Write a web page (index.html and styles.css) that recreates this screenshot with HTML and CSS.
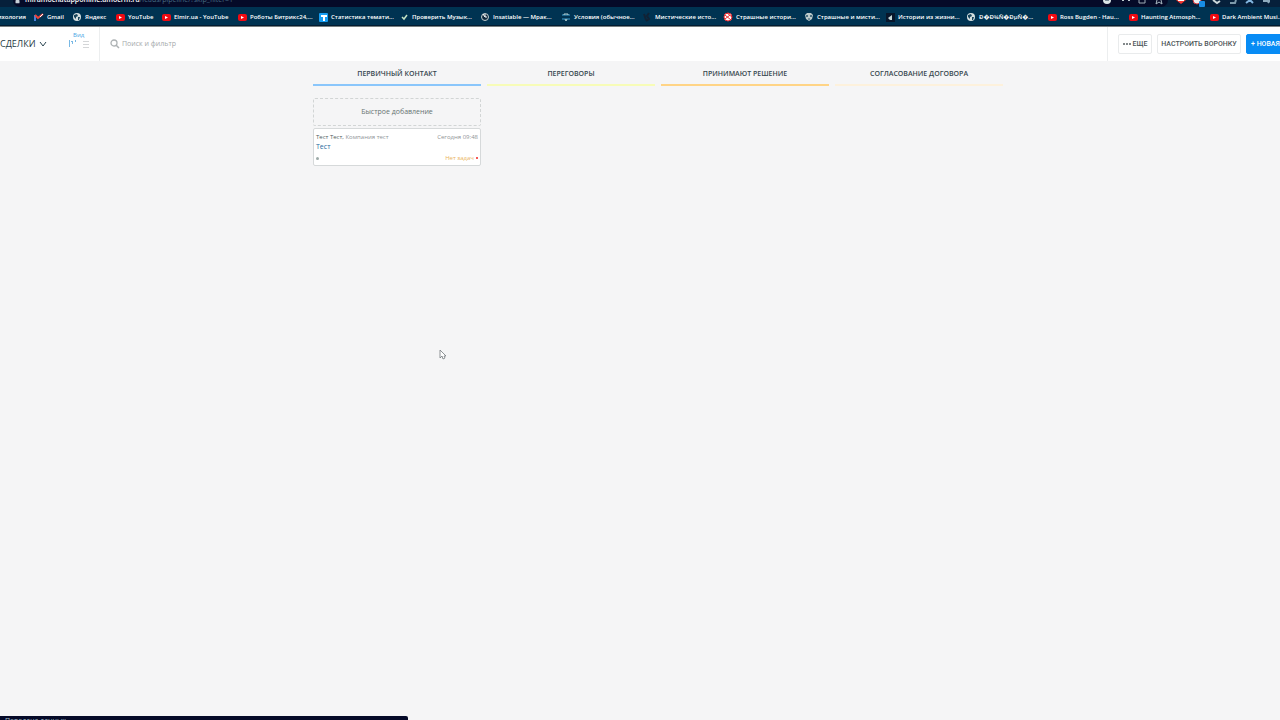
FILE: index.html
```html
<!DOCTYPE html>
<html lang="ru">
<head>
<meta charset="utf-8">
<meta name="viewport" content="width=device-width, initial-scale=1">
<title>Сделки</title>
<link rel="stylesheet" href="styles.css">
</head>
<body>
<svg class="defs" aria-hidden="true">
  <symbol id="yt" viewBox="0 0 10 10"><rect x="1" y="2" width="9" height="7" rx="2" fill="#f00a12"/><path d="M4 4l3 1.5L4 7z" fill="#fff"/></symbol>
  <symbol id="globe" viewBox="0 0 10 10"><circle cx="5" cy="5" r="4" fill="#d5dfdf"/><path d="M2 3l3-1 1 2-2 1v2L2 5zM6 5l2 0-1 3-1 0z" fill="#17445b"/></symbol>
</svg>
<header class="browser">
  <div class="toolbar">
    <div class="omnibox">
      <svg class="lock" viewBox="0 0 6 6"><rect width="6" height="5" rx="1" fill="#c6d0d8"/></svg>
      <span class="url"><b>miramochatapponline.amocrm.ru</b>/leads/pipeline/?skip_filter=1</span>
      <svg class="omni-icons" viewBox="0 0 70 8"><circle cx="9" cy="0" r="4" fill="#dce6e7"/><path d="M7 0h4" stroke="#16334a"/><path d="M24 0h2M30 0h2" stroke="#bdc9ce" stroke-width="2"/><path d="M41 0v3h6V0" fill="none" stroke="#9eabb5"/><path d="M58 4l1-4M63 0l1 4-3-2-3 2" fill="none" stroke="#a9b8c0"/></svg>
    </div>
    <svg class="extensions" viewBox="0 0 112 8"><path d="M8 0h10l-5 4z" fill="#f5352f"/><path d="M10 0h6" stroke="#fff" stroke-width="2"/><circle cx="29" cy="0" r="4" fill="#eee" stroke="#d5353a"/><rect x="31" y="1" width="6" height="6" rx="1" fill="#188ce5"/><path d="M45 0l4 3 3-2" fill="none" stroke="#cbd7da" stroke-width="2"/><path d="M62 3h5l1-3" fill="none" stroke="#7d9aaa" stroke-width="2"/><path d="M78 3l4-3 3 3" fill="none" stroke="#82b5df" stroke-width="2"/><path d="M95 1h7M99 0l2 3" fill="none" stroke="#8eabbd" stroke-width="2"/></svg>
  </div>
  <nav class="bookmarks">
    <a class="first" href="#">ихология</a>
    <a class="gmail" href="#"><svg viewBox="0 0 10 10"><path d="M1 9V3" stroke="#4b80d8" stroke-width="2"/><path d="M1 3l3 3 5-4" fill="none" stroke="#ef4339" stroke-width="2"/><path d="M6 5l3-3" stroke="#fff"/></svg>Gmail</a>
    <a class="yandex" href="#"><svg viewBox="0 0 10 10"><use href="#globe"/></svg>Яндекс</a>
    <a class="youtube" href="#"><svg viewBox="0 0 10 10"><use href="#yt"/></svg>YouTube</a>
    <a class="channel" href="#"><svg viewBox="0 0 10 10"><use href="#yt"/></svg>Elmir.ua - YouTube</a>
    <a href="#"><svg viewBox="0 0 10 10"><use href="#yt"/></svg>Роботы Битрикс24,...</a>
    <a href="#"><svg viewBox="0 0 10 10"><rect x="1" y="1" width="9" height="9" rx="1" fill="#159df2"/><path d="M3 3h6v2H7v4H5V5H3z" fill="#fff"/></svg>Статистика темати...</a>
    <a href="#"><svg viewBox="0 0 10 10"><path d="M3 5l2 2 3-4" fill="none" stroke="#c5e4c5" stroke-width="1.5"/></svg>Проверить Музык...</a>
    <a href="#"><svg viewBox="0 0 10 10"><circle cx="5" cy="5" r="3.5" fill="#10293c" stroke="#c4cfd1"/><path d="M3 2l2 3h2M5 2v3" fill="none" stroke="#fff"/></svg>Insatiable — Мрак...</a>
    <a href="#"><svg viewBox="0 0 10 10"><path d="M1 3h8M1 7h8" stroke="#3d9fcf"/><path d="M3 3V2h4v1M4 7l1 2 1-2" fill="none" stroke="#b9d2d3"/></svg>Условия (обычное...</a>
    <a href="#"><svg viewBox="0 0 10 10"><path d="M2 2l2 6M7 1L5 4l2 3-3 2" fill="none" stroke="#112235" stroke-width="2"/></svg>Мистические исто...</a>
    <a href="#"><svg viewBox="0 0 10 10"><circle cx="5" cy="5" r="4" fill="#fff" stroke="#e8292f"/><path d="M2 3l6 5M4 1l5 4M2 7l5-4" stroke="#e8292f"/></svg>Страшные истори...</a>
    <a href="#"><svg viewBox="0 0 10 10"><path d="M1 3l2-2h4l2 2-1 4-3 2-3-2z" fill="#bdcaca"/><circle cx="3" cy="4" r="1" fill="#28536a"/><circle cx="7" cy="4" r="1" fill="#28536a"/><path d="M4 7h2" stroke="#28536a"/></svg>Страшные и мисти...</a>
    <a href="#"><svg viewBox="0 0 10 10"><rect x="1" y="1" width="9" height="9" fill="#08162b"/><path d="M3 6l4-3v5H5z" fill="#c7d8d8"/></svg>Истории из жизни...</a>
    <a href="#"><svg viewBox="0 0 10 10"><use href="#globe"/></svg>Ð�Ð¾Ñ�ÐµÑ�...</a>
    <a href="#"><svg viewBox="0 0 10 10"><use href="#yt"/></svg>Ross Bugden - Hau...</a>
    <a href="#"><svg viewBox="0 0 10 10"><use href="#yt"/></svg>Haunting Atmosph...</a>
    <a href="#"><svg viewBox="0 0 10 10"><use href="#yt"/></svg>Dark Ambient Musi...</a>
  </nav>
</header>
<section class="topbar">
  <button class="title" type="button">СДЕЛКИ <svg viewBox="0 0 8 6"><path d="M1 1l3 4 3-4" fill="none" stroke="#294450"/></svg></button>
  <div class="view">
    <span>Вид</span>
    <div class="modes">
      <button type="button" aria-label="Воронка"><svg viewBox="0 0 8 8"><path d="M1.5 0v7M3 1.5h2M4.5 1v3M7.5 0v2" fill="none" stroke="#79b9e5"/></svg></button>
      <button type="button" aria-label="Список"><svg viewBox="0 0 8 8"><path d="M1 1.5h6M1 4.5h6M1 7.5h6" stroke="#d4d6d8"/></svg></button>
    </div>
  </div>
  <label class="search">
    <svg viewBox="0 0 10 10"><circle cx="4" cy="4" r="3" fill="none" stroke="#adb2b4" stroke-width="1.3"/><path d="M6 6l3 3" stroke="#adb2b4" stroke-width="1.5"/></svg>
    <input type="search" placeholder="Поиск и фильтр" aria-label="Поиск и фильтр">
  </label>
  <div class="actions">
    <button class="more" type="button"><svg viewBox="0 0 8 2"><path d="M0 1h2M3 1h2M6 1h2" stroke="#596164" stroke-width="1.5"/></svg>ЕЩЕ</button>
    <button class="setup" type="button">НАСТРОИТЬ ВОРОНКУ</button>
    <button class="primary" type="button">+ НОВАЯ</button>
  </div>
</section>
<main class="board">
  <section class="column">
    <h2 class="blue">ПЕРВИЧНЫЙ КОНТАКТ</h2>
    <button class="quick" type="button">Быстрое добавление</button>
    <article class="card">
      <div class="row"><span class="who">Тест Тест, <span>Компания тест</span></span><time>Сегодня 09:48</time></div>
      <a href="#">Тест</a>
      <div class="row foot"><i class="dot"></i><span class="task">Нет задач <i class="dot red"></i></span></div>
    </article>
  </section>
  <section class="column"><h2 class="lime">ПЕРЕГОВОРЫ</h2></section>
  <section class="column"><h2 class="amber">ПРИНИМАЮТ РЕШЕНИЕ</h2></section>
  <section class="column"><h2 class="cream">СОГЛАСОВАНИЕ ДОГОВОРА</h2></section>
</main>
<svg class="cursor" viewBox="0 0 8 12" aria-hidden="true"><path d="M1 1v8l2-2 1 3 2-1-1-2h2z" fill="#fff" stroke="#747a7d" stroke-width=".8"/></svg>
<div class="status">Передача данных</div>
</body>
</html>
```
FILE: styles.css
```css
* { box-sizing: border-box; }
body {
  margin: 0;
  min-height: 100vh;
  overflow: hidden;
  background: #f5f5f6;
  font: 7px/10px "Open Sans", "Noto Sans", sans-serif;
  color: #37474f;
}
button, input { font: inherit; color: inherit; }
button { padding: 0; border: 0; background: none; white-space: nowrap; }
a { text-decoration: none; }
svg { display: block; flex: none; }
.defs { position: absolute; width: 0; height: 0; }

.browser { height: 27px; background: #003352; border-bottom: 1px solid #777f80; box-shadow: inset 0 -1px #031c32; overflow: hidden; }
.toolbar { display: flex; height: 7px; padding-left: 13px; background: #06203b; }
.omnibox { display: flex; flex: 1; min-width: 0; padding-left: 2px; background: #050a28; border-radius: 0 0 7px 7px; overflow: hidden; }
.lock { width: 5px; height: 4px; }
.url { flex: 1; margin: -5px 0 0 5px; color: #456a83; white-space: nowrap; }
.url b { font-weight: 600; color: #fff; }
.omni-icons { width: 70px; height: 8px; }
.extensions { width: 112px; height: 8px; }
.bookmarks { display: flex; height: 19px; align-items: center; overflow: hidden; font-size: 6px; font-weight: 600; }
.bookmarks a { display: flex; flex: none; align-items: center; gap: 3px; width: 81px; color: #fff; white-space: nowrap; }
.bookmarks svg { width: 10px; height: 10px; }
.bookmarks .first { width: 34px; padding-right: 8px; justify-content: flex-end; }
.bookmarks .gmail { width: 38px; }
.bookmarks .yandex { width: 43px; }
.bookmarks .youtube { width: 46px; }
.bookmarks .channel { width: 76px; }

.topbar { display: flex; height: 34px; background: #fff; align-items: center; }
.title { display: flex; align-items: center; gap: 4px; width: 68px; font-size: 9px; color: #263b45; }
.title svg { width: 8px; height: 6px; }
.view { width: 32px; height: 34px; padding-top: 4px; border-right: 1px solid #eceeef; color: #46a4e4; font-size: 6px; line-height: 8px; }
.view span { padding-left: 5px; }
.modes { display: flex; gap: 6px; padding-top: 1px; }
.modes svg { width: 8px; height: 8px; }
.search { display: flex; flex: 1; align-items: center; gap: 2px; padding-left: 10px; }
.search svg { width: 10px; height: 10px; }
.search input { flex: 1; min-width: 0; padding: 0; border: 0; outline: 0; background: none; }
.search input::placeholder { color: #a5a9ab; opacity: 1; }
.actions { display: flex; gap: 5px; width: 173px; height: 34px; padding: 7px 0 7px 10px; border-left: 1px solid #eceeef; overflow: hidden; font-family: Roboto, "Noto Sans", sans-serif; }
.actions button { display: flex; flex: none; align-items: center; justify-content: center; gap: 2px; border: 1px solid #e9ebec; border-radius: 2px; font-weight: 500; color: #4d5558; }
.actions svg { width: 8px; height: 2px; }
.actions .more { width: 34px; }
.actions .setup { width: 84px; }
.actions .primary { width: 64px; padding-left: 4px; justify-content: flex-start; border-color: #088cf5; background: #088cf5; color: #fff; }

.board { display: flex; gap: 6px; padding-left: 313px; }
.column { width: 168px; flex: none; }
.column h2 { margin: 0 0 12px; padding: 8px 0 5px; border-bottom: 2px solid; font-size: 7px; font-weight: 600; line-height: 10px; text-align: center; color: #37474f; }
.column .blue { border-color: #8ac6fb; }
.column .lime { border-color: #f7fcb8; }
.column .amber { border-color: #ffd486; }
.column .cream { border-color: #fdf1dc; }
.quick { display: block; width: 100%; height: 28px; border: 1px dashed #d2d5d5; border-radius: 2px; color: #667371; }
.card { margin-top: 2px; padding: 3px 2px 2px; border: 1px solid #d6d9da; border-radius: 2px; background: #fff; }
.card a { display: block; color: #286b9d; }
.row { display: flex; justify-content: space-between; align-items: center; }
.card .row { font-size: 6px; color: #8f9497; }
.who { color: #535d60; }
.who span { color: #8f9497; }
.card .foot { margin-top: 1px; }
.card .task { display: flex; align-items: center; gap: 2px; color: #eab45d; }
.dot { width: 3px; height: 3px; border-radius: 2px; background: #9daaa8; }
.red { width: 2px; height: 2px; background: #f3231f; }
.cursor { position: absolute; left: 439px; top: 349px; width: 8px; height: 12px; }
.status { position: absolute; left: 0; bottom: 0; width: 408px; height: 4px; padding-left: 5px; overflow: hidden; border-radius: 0 2px 0 0; background: #050a28; color: #a9c2ce; }
```
